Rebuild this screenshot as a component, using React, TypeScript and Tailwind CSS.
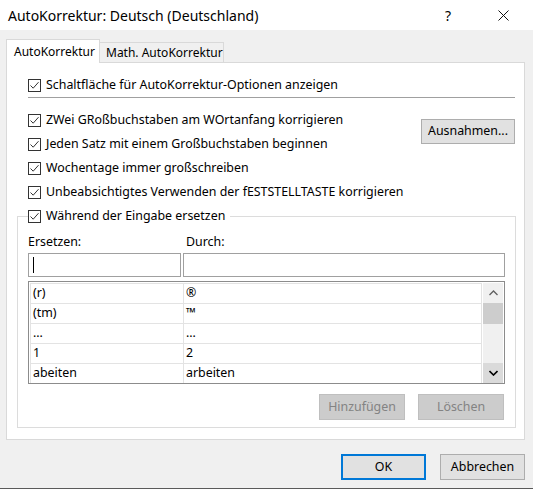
import React from 'react'

function CheckBox() {
  return (
    <span className="w-[13px] h-[13px] border border-[#333333] bg-white flex items-center justify-center shrink-0">
      <svg width="11" height="11" viewBox="0 0 11 11">
        <path d="M1.5 5.5 L4.2 8.2 L9.5 2.2" stroke="#333333" strokeWidth="1" fill="none" />
      </svg>
    </span>
  )
}

function CheckRow({ label }: { label: string }) {
  return (
    <div className="h-[24px] flex items-center gap-[5px]">
      <CheckBox />
      <span>{label}</span>
    </div>
  )
}

const entries = [
  ['(r)', '®'],
  ['(tm)', '™'],
  ['…', '…'],
  ['1', '2'],
  ['abeiten', 'arbeiten'],
]

export default function App() {
  return (
    <div className="w-[533px] h-[489px] bg-[#f0f0f0] flex flex-col border-b border-[#5a5a5a] text-[12.4px] text-black font-['Noto_Sans','Open_Sans',sans-serif] overflow-hidden">
      {/* title bar */}
      <div className="h-[30px] shrink-0 bg-white flex items-center pl-[8px] pr-[24px]">
        <span className="text-[14px]">AutoKorrektur: Deutsch (Deutschland)</span>
        <span className="ml-auto mr-[47px] text-[14px]">?</span>
        <svg width="11" height="11" viewBox="0 0 11 11">
          <path d="M0.5 0.5 L10.5 10.5 M10.5 0.5 L0.5 10.5" stroke="#111" strokeWidth="1" />
        </svg>
      </div>

      <div className="pt-[9px] px-[6px] flex flex-col">
        {/* tabs */}
        <div className="flex items-end h-[24px] -mb-[1px] relative z-10 text-[12px]">
          <div className="w-[94px] h-[24px] bg-white border border-b-0 border-[#d9d9d9] pl-[7px] flex items-center">
            AutoKorrektur
          </div>
          <div className="w-[124px] h-[21px] bg-[#f0f0f0] border border-l-0 border-[#d9d9d9] pl-[6px] flex items-center">
            Math. AutoKorrektur
          </div>
        </div>

        {/* panel */}
        <div className="w-[519px] h-[378px] bg-white border border-[#d9d9d9] pl-[10px] pr-[8px] flex flex-col">
          <div className="pl-[11px] pr-[1px] flex flex-col">
            <div className="mt-[12px] h-[20px] flex items-center gap-[5px]">
              <CheckBox />
              <span>Schaltfläche für AutoKorrektur-Optionen anzeigen</span>
            </div>
            <div className="mt-[2px] border-t border-[#a0a0a0]" />
            <div className="mt-[10px] flex">
              <div className="flex-1 flex flex-col">
                <CheckRow label="ZWei GRoßbuchstaben am WOrtanfang korrigieren" />
                <CheckRow label="Jeden Satz mit einem Großbuchstaben beginnen" />
                <CheckRow label="Wochentage immer großschreiben" />
                <CheckRow label="Unbeabsichtigtes Verwenden der fESTSTELLTASTE korrigieren" />
              </div>
              <div className="mt-[11px] w-[94px] h-[25px] bg-[#e1e1e1] border border-[#adadad] flex items-center justify-center">
                Ausnahmen...
              </div>
            </div>
          </div>

          <fieldset className="border border-[#dcdcdc] pl-[10px] pr-[10px] pb-[7px]">
            <legend className="pr-[5px] h-[24px] flex items-center gap-[5px]">
              <CheckBox />
              <span>Während der Eingabe ersetzen</span>
            </legend>
            <div className="mt-[4px] h-[21px] flex items-center">
              <span className="w-[158px]">Ersetzen:</span>
              <span>Durch:</span>
            </div>
            <div className="flex gap-[2px] h-[24px]">
              <div className="w-[153px] border border-[#a0a0a0] flex items-center">
                <span className="ml-[4px] w-[1px] h-[16px] bg-black" />
              </div>
              <div className="flex-1 border border-[#a0a0a0]" />
            </div>

            {/* list */}
            <div className="mt-[4px] h-[103px] border border-[#8c8c8c] px-[1px] pt-[1px] flex overflow-hidden">
              <div className="flex-1 flex flex-col border-t border-[#e3e3e3]">
                {entries.map(([a, b], i) => (
                  <div key={i} className="h-[20px] shrink-0 flex border-b border-[#e3e3e3]">
                    <div className="w-[154px] border-l border-r border-[#e3e3e3] pl-[2px] flex items-center">{a}</div>
                    <div className="flex-1 border-r border-[#e3e3e3] pl-[2px] flex items-center">{b}</div>
                  </div>
                ))}
              </div>
              <div className="w-[20px] ml-[1px] bg-[#f0f0f0] flex flex-col">
                <div className="h-[20px] flex items-center justify-center">
                  <svg width="9" height="6" viewBox="0 0 9 6">
                    <path d="M0.5 5 L4.5 1 L8.5 5" stroke="#606060" strokeWidth="1.3" fill="none" />
                  </svg>
                </div>
                <div className="h-[21px] bg-[#cdcdcd]" />
                <div className="flex-1" />
                <div className="h-[20px] bg-[#dadada] flex items-center justify-center">
                  <svg width="9" height="6" viewBox="0 0 9 6">
                    <path d="M0.5 1 L4.5 5 L8.5 1" stroke="#000" strokeWidth="1.6" fill="none" />
                  </svg>
                </div>
              </div>
            </div>

            <div className="mt-[10px] flex justify-end gap-[13px] pr-[1px]">
              <div className="w-[86px] h-[26px] bg-[#cccccc] border border-[#bfbfbf] text-[#838383] flex items-center justify-center">
                Hinzufügen
              </div>
              <div className="w-[86px] h-[26px] bg-[#cccccc] border border-[#bfbfbf] text-[#838383] flex items-center justify-center">
                Löschen
              </div>
            </div>
          </fieldset>
        </div>

        {/* dialog buttons */}
        <div className="mt-[14px] flex justify-end gap-[14px] pr-[2px]">
          <div className="w-[85px] h-[26px] bg-[#e1e1e1] border-2 border-[#0078d7] flex items-center justify-center">
            OK
          </div>
          <div className="w-[85px] h-[26px] bg-[#e1e1e1] border border-[#adadad] flex items-center justify-center">
            Abbrechen
          </div>
        </div>
      </div>
    </div>
  )
}
